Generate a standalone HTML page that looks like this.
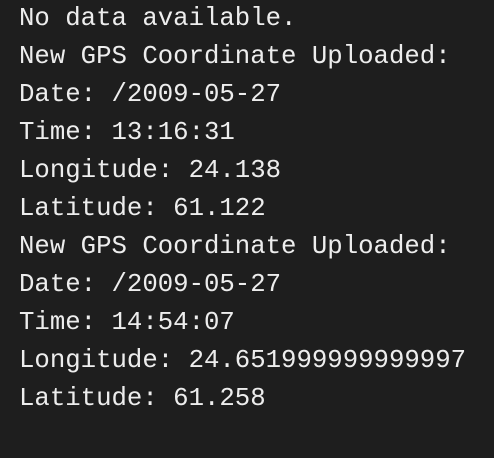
<html><head><style>
body{margin:0;background:#1e1e1e;width:494px;height:458px;overflow:hidden}
pre{margin:0;position:absolute;left:19px;top:0px;font-family:"Liberation Mono",monospace;font-size:25.7px;line-height:38px;color:#ededed}
</style></head><body><pre>No data available.
New GPS Coordinate Uploaded:
Date: /2009-05-27
Time: 13:16:31
Longitude: 24.138
Latitude: 61.122
New GPS Coordinate Uploaded:
Date: /2009-05-27
Time: 14:54:07
Longitude: 24.651999999999997
Latitude: 61.258</pre></body></html>
